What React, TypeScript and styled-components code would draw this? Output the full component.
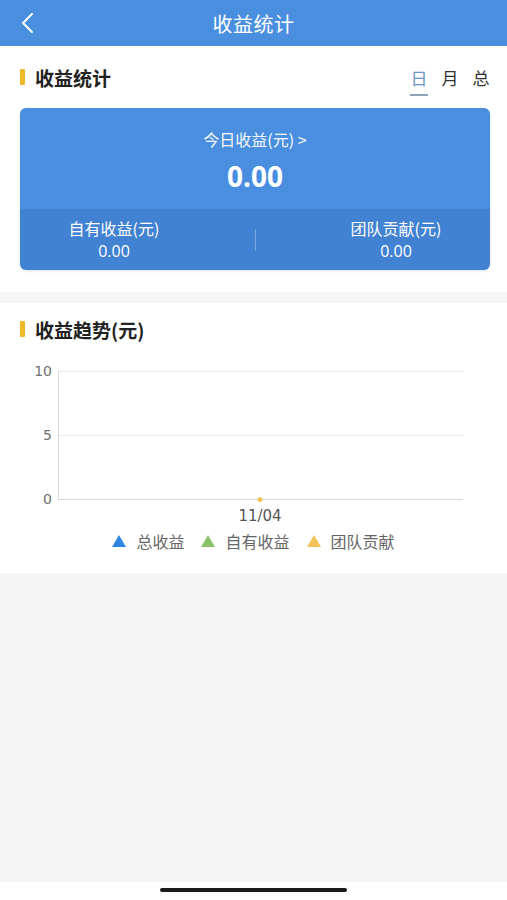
import styled, { createGlobalStyle } from "styled-components";
import { useState } from "react";

const GlobalStyle = createGlobalStyle`
    html, body {
        margin: 0;
        padding: 0;
        background: #f5f5f5;
        font-family: "Noto Sans CJK SC", "Noto Sans", sans-serif;
    }
    * { box-sizing: border-box; }
`;

const tabs = ["日", "月", "总"];

const legend = [
    { name: "总收益", color: "#2f86e0" },
    { name: "自有收益", color: "#8cc26a" },
    { name: "团队贡献", color: "#f4c45a" },
];

export default function App() {
    const [tab, setTab] = useState(0);

    return (
        <Page>
            <GlobalStyle />
            <NavBar>
                <BackButton>
                    <svg width="14" height="22" viewBox="0 0 14 22" fill="none">
                        <path d="M12 2 L3 11 L12 20" stroke="#fff" strokeWidth="2" strokeLinecap="round" strokeLinejoin="round" />
                    </svg>
                </BackButton>
                <NavTitle>收益统计</NavTitle>
            </NavBar>

            <Section>
                <SectionHead height={62}>
                    <SectionTitle>收益统计</SectionTitle>
                    <Tabs>
                        {tabs.map((t, i) => (
                            <Tab key={t} active={i === tab} onClick={() => setTab(i)}>
                                {t}
                            </Tab>
                        ))}
                    </Tabs>
                </SectionHead>
                <Card>
                    <CardTop>
                        <TodayLabel>今日收益(元) &gt;</TodayLabel>
                        <TodayValue>0.00</TodayValue>
                    </CardTop>
                    <CardBottom>
                        <SubStat>
                            <SubLabel>自有收益(元)</SubLabel>
                            <SubValue>0.00</SubValue>
                        </SubStat>
                        <Divider />
                        <SubStat>
                            <SubLabel>团队贡献(元)</SubLabel>
                            <SubValue>0.00</SubValue>
                        </SubStat>
                    </CardBottom>
                </Card>
            </Section>

            <TrendSection>
                <SectionHead height={52}>
                    <SectionTitle>收益趋势(元)</SectionTitle>
                </SectionHead>
                <Chart>
                    <svg width="507" height="160" viewBox="0 0 507 160">
                        <g fontFamily="'DejaVu Sans', sans-serif" fontSize="14" fill="#707070">
                            <text x="52" y="21" textAnchor="end">10</text>
                            <text x="52" y="85" textAnchor="end">5</text>
                            <text x="52" y="149" textAnchor="end">0</text>
                        </g>
                        <line x1="58" y1="16.5" x2="463" y2="16.5" stroke="#ececec" />
                        <line x1="58" y1="80.5" x2="463" y2="80.5" stroke="#ececec" />
                        <line x1="58" y1="144.5" x2="463" y2="144.5" stroke="#d8d8d8" />
                        <line x1="58.5" y1="16" x2="58.5" y2="145" stroke="#d8d8d8" />
                        <circle cx="260" cy="144.5" r="2.5" fill="#f4c45a" />
                        <text x="260" y="166" textAnchor="middle" fontFamily="'DejaVu Sans', sans-serif" fontSize="15" fill="#555">11/04</text>
                    </svg>
                </Chart>
                <Legend>
                    {legend.map((l) => (
                        <LegendItem key={l.name}>
                            <svg width="14" height="12" viewBox="0 0 14 12">
                                <path d="M7 0 L14 12 L0 12 Z" fill={l.color} />
                            </svg>
                            <span>{l.name}</span>
                        </LegendItem>
                    ))}
                </Legend>
            </TrendSection>

            <Filler />
            <HomeBar>
                <HomeIndicator />
            </HomeBar>
        </Page>
    );
}

const Page = styled.div`
    width: 507px;
    height: 900px;
    display: flex;
    flex-direction: column;
    background: #f5f5f5;
`;

const NavBar = styled.div`
    height: 46px;
    background: #4a8fdf;
    display: flex;
    align-items: center;
    justify-content: center;
    position: relative;
`;

const BackButton = styled.div`
    position: absolute;
    left: 20px;
    top: 12px;
    display: flex;
`;

const NavTitle = styled.div`
    color: #fff;
    font-size: 20px;
    letter-spacing: 0.5px;
`;

const Section = styled.div`
    background: #fff;
    padding: 0 17px 22px 20px;
`;

const SectionHead = styled.div<{ height: number }>`
    height: ${(p) => p.height}px;
    display: flex;
    align-items: center;
    justify-content: space-between;
`;

const SectionTitle = styled.div`
    display: flex;
    align-items: center;
    font-size: 19px;
    font-weight: 700;
    color: #222;
    &::before {
        content: "";
        width: 5px;
        height: 16px;
        background: #f0b92a;
        border-radius: 1px;
        margin-right: 10px;
    }
`;

const Tabs = styled.div`
    display: flex;
    gap: 13px;
    align-self: stretch;
`;

const Tab = styled.div<{ active?: boolean }>`
    width: 18px;
    display: flex;
    align-items: center;
    justify-content: center;
    font-size: 17px;
    color: ${(p) => (p.active ? "#6d96c6" : "#333")};
    position: relative;
    cursor: pointer;
    &::after {
        content: "";
        display: ${(p) => (p.active ? "block" : "none")};
        position: absolute;
        left: 0;
        right: 0;
        bottom: 12px;
        height: 2px;
        background: #8fa3b9;
    }
`;

const Card = styled.div`
    width: 470px;
    border-radius: 6px;
    overflow: hidden;
    box-shadow: 0 1px 3px rgba(60, 110, 180, 0.2);
`;

const CardTop = styled.div`
    height: 101px;
    background: #4a8fdf;
    display: flex;
    flex-direction: column;
    align-items: center;
    padding-top: 20px;
    color: #fff;
`;

const TodayLabel = styled.div`
    font-size: 16px;
    line-height: 22px;
    opacity: 0.95;
`;

const TodayValue = styled.div`
    font-family: "Open Sans", "Noto Sans", sans-serif;
    font-size: 28px;
    font-weight: 700;
    line-height: 36px;
    margin-top: 8px;
`;

const CardBottom = styled.div`
    height: 61px;
    background: #4282d2;
    display: flex;
    align-items: center;
    justify-content: space-between;
    padding: 0 19px;
    color: #fff;
`;

const SubStat = styled.div`
    width: 150px;
    display: flex;
    flex-direction: column;
    align-items: center;
`;

const SubLabel = styled.div`
    font-size: 16px;
    line-height: 21px;
`;

const SubValue = styled.div`
    font-family: "Open Sans", "Noto Sans", sans-serif;
    font-size: 16px;
    line-height: 21px;
    margin-top: 2px;
`;

const Divider = styled.div`
    width: 1px;
    height: 22px;
    background: rgba(255, 255, 255, 0.3);
`;

const TrendSection = styled.div`
    background: #fff;
    margin-top: 11px;
    padding-left: 20px;
    height: 270px;
    display: flex;
    flex-direction: column;
`;

const Chart = styled.div`
    margin-left: -20px;
    height: 168px;
    svg { display: block; overflow: visible; }
`;

const Legend = styled.div`
    display: flex;
    justify-content: center;
    gap: 17px;
    margin-left: -20px;
    margin-top: 7px;
`;

const LegendItem = styled.div`
    display: flex;
    align-items: center;
    gap: 10px;
    font-size: 16px;
    line-height: 22px;
    color: #666;
`;

const Filler = styled.div`
    flex: 1;
`;

const HomeBar = styled.div`
    height: 18px;
    background: #fff;
    display: flex;
    justify-content: center;
    padding-top: 6px;
`;

const HomeIndicator = styled.div`
    width: 187px;
    height: 4px;
    border-radius: 2px;
    background: #1a1a1a;
`;
